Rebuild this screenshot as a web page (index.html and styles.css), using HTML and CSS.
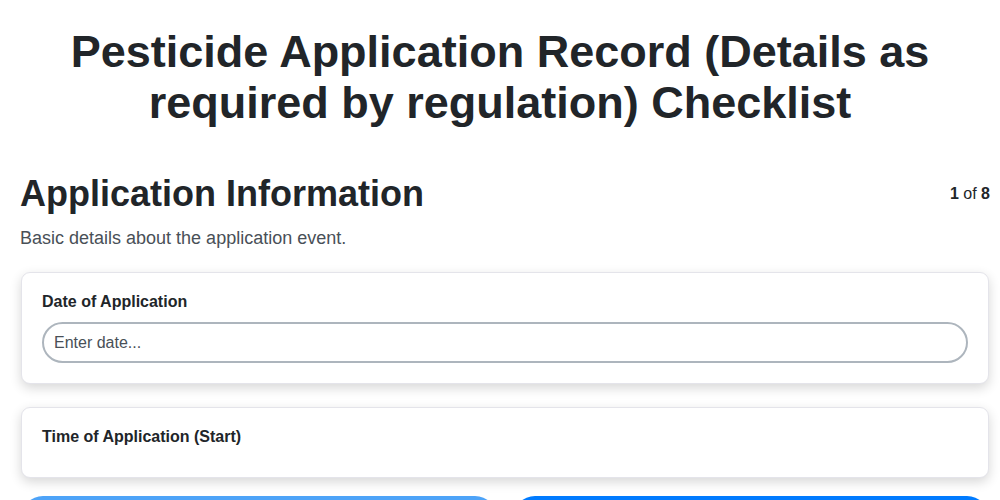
FILE: index.html
```html
<!DOCTYPE html>
<html lang="en">
<head>
<meta charset="utf-8">
<title>Pesticide Application Record Checklist</title>
<link rel="stylesheet" href="styles.css">
</head>
<body>
<h1 class="title">Pesticide Application Record (Details as required by regulation) Checklist</h1>
<div class="page">
  <div class="section-head">
    <h2 class="section-title">Application Information</h2>
    <div class="counter"><b>1</b> of <b>8</b></div>
  </div>
  <p class="section-desc">Basic details about the application event.</p>
  <div class="card">
    <label class="field-label" for="date">Date of Application</label>
    <input class="field-input" id="date" type="text" placeholder="Enter date...">
  </div>
  <div class="card">
    <label class="field-label">Time of Application (Start)</label>
  </div>
  <div class="nav">
    <button class="btn btn-prev">Previous</button>
    <button class="btn btn-next">Next</button>
  </div>
</div>
</body>
</html>
```
FILE: styles.css
```css
* { box-sizing: border-box; }
html, body { margin: 0; padding: 0; background: #ffffff; }
body {
  font-family: "Liberation Sans", Arial, sans-serif;
  color: #212529;
}
.title {
  margin: 0;
  padding: 26px 40px 0;
  text-align: center;
  font-size: 45px;
  line-height: 51px;
  font-weight: 700;
}
.page {
  padding: 0 10px 20px 20px;
  display: flex;
  flex-direction: column;
}
.section-head {
  display: flex;
  justify-content: space-between;
  align-items: center;
  margin-top: 44px;
}
.section-title {
  margin: 0;
  font-size: 36px;
  line-height: 44px;
  font-weight: 700;
}
.counter {
  font-size: 16px;
}
.section-desc {
  margin: 12px 0 23px;
  font-size: 18px;
  color: #495057;
}
.card {
  background: #fff;
  border: 1px solid #e4e4ea;
  border-radius: 9px;
  box-shadow: 0 4px 12px rgba(0, 0, 0, 0.16);
  padding: 20px;
  margin: 0 1px 23px;
  display: flex;
  flex-direction: column;
}
.field-label {
  font-size: 16px;
  font-weight: 700;
  line-height: 18px;
  margin-bottom: 11px;
}
.field-input {
  height: 41px;
  border: 2px solid #adb5bd;
  border-radius: 21px;
  padding: 0 10px;
  font-family: inherit;
  font-size: 16px;
  color: #212529;
  background: #fff;
}
.field-input::placeholder { color: #495057; }
.nav {
  display: flex;
  gap: 16px;
  margin: -5px 1px 0;
}
.btn {
  flex: 1;
  height: 60px;
  border: none;
  border-radius: 22px;
  font-family: inherit;
  font-size: 16px;
  color: #fff;
}
.btn-prev { background: #4da3f8; }
.btn-next { background: #007bff; }
```
